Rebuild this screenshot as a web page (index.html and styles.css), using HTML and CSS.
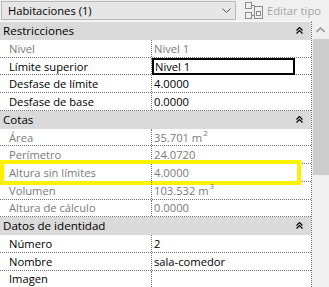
FILE: index.html
```html
<!DOCTYPE html>
<html>
<head>
<meta charset="utf-8">
<link rel="stylesheet" href="styles.css">
</head>
<body>
<div class="top">
  <div class="dropdown">
    <span>Habitaciones (1)</span>
    <svg class="chev" width="9" height="6" viewBox="0 0 9 6"><path d="M0.5 0.5 L4.5 4.5 L8.5 0.5" fill="none" stroke="#555" stroke-width="1"/></svg>
  </div>
  <div class="edit">
    <svg class="edit-ico" width="18" height="17" viewBox="0 0 18 17">
      <g fill="none" stroke="#8c8c8c" stroke-width="1">
        <rect x="0.5" y="0.5" width="6" height="6"/>
        <rect x="0.5" y="10.5" width="6" height="6"/>
        <path d="M6.5 3.5 H9.5 V13.5 H6.5"/>
        <rect x="9.5" y="4.5" width="8" height="12"/>
        <rect x="11.5" y="9.5" width="4" height="4"/>
      </g>
    </svg>
    <span>Editar tipo</span>
  </div>
</div>
<div class="main">
  <div class="table">
    <div class="hdr"><span>Restricciones</span><svg class="col" width="7" height="7" viewBox="0 0 7 7"><path d="M0.5 3.5 L3.5 0.5 L6.5 3.5 M0.5 6.5 L3.5 3.5 L6.5 6.5" fill="none" stroke="#000" stroke-width="1.2"/></svg></div>
    <div class="row ro"><div class="k">Nivel</div><div class="v">Nivel 1</div></div>
    <div class="row"><div class="k">Límite superior</div><div class="v"><div class="edit-box">Nivel 1</div></div></div>
    <div class="row"><div class="k">Desfase de límite</div><div class="v">4.0000</div></div>
    <div class="row"><div class="k">Desfase de base</div><div class="v">0.0000</div></div>
    <div class="hdr"><span>Cotas</span><svg class="col" width="7" height="7" viewBox="0 0 7 7"><path d="M0.5 3.5 L3.5 0.5 L6.5 3.5 M0.5 6.5 L3.5 3.5 L6.5 6.5" fill="none" stroke="#000" stroke-width="1.2"/></svg></div>
    <div class="row ro"><div class="k">Área</div><div class="v">35.701 m<sup>2</sup></div></div>
    <div class="row ro"><div class="k">Perímetro</div><div class="v">24.0720</div></div>
    <div class="row ro mark"><div class="k">Altura sin límites</div><div class="v">4.0000</div><div class="hl"></div></div>
    <div class="row ro"><div class="k">Volumen</div><div class="v">103.532 m<sup>3</sup></div></div>
    <div class="row ro"><div class="k">Altura de cálculo</div><div class="v">0.0000</div></div>
    <div class="hdr"><span>Datos de identidad</span><svg class="col" width="7" height="7" viewBox="0 0 7 7"><path d="M0.5 3.5 L3.5 0.5 L6.5 3.5 M0.5 6.5 L3.5 3.5 L6.5 6.5" fill="none" stroke="#000" stroke-width="1.2"/></svg></div>
    <div class="row"><div class="k">Número</div><div class="v">2</div></div>
    <div class="row"><div class="k">Nombre</div><div class="v">sala-comedor</div></div>
    <div class="row"><div class="k">Imagen</div><div class="v"></div></div>
  </div>
  <div class="scroll">
    <div class="up"><svg width="9" height="6" viewBox="0 0 9 6"><path d="M0.5 5 L4.5 1 L8.5 5" fill="none" stroke="#999" stroke-width="1.6"/></svg></div>
    <div class="thumb"></div>
  </div>
</div>
</body>
</html>
```
FILE: styles.css
```css
html, body {
  margin: 0;
  padding: 0;
}
body {
  width: 329px;
  height: 287px;
  overflow: hidden;
  background: #f0f0f0;
  font-family: "Open Sans", "Noto Sans", sans-serif;
  font-size: 11.2px;
  color: #000;
}
.top {
  display: flex;
  align-items: center;
  height: 21px;
}
.dropdown {
  margin-left: 1px;
  width: 235px;
  height: 19px;
  box-sizing: border-box;
  border: 1px solid #b9b9b9;
  background: #e6e6e6;
  display: flex;
  align-items: center;
  justify-content: space-between;
  padding: 0 4px 0 6px;
}
.edit {
  display: flex;
  align-items: center;
  margin-left: 9px;
  color: #a6a6a6;
  white-space: nowrap;
}
.edit-ico {
  margin-right: 4px;
}
.main {
  display: flex;
  height: 266px;
}
.table {
  width: 311px;
  border-right: 1px dotted #777;
  border-top: 1px solid #fafafa;
  background: #fff;
}
.hdr {
  height: 17px;
  background: #dadada;
  display: flex;
  align-items: center;
  justify-content: space-between;
  padding: 0 8px 0 3px;
  border-bottom: 1px solid #dadada;
  font-size: 11.6px;
}
.row {
  position: relative;
  display: flex;
  height: 16.7px;
  border-bottom: 1px dotted #777;
}
.k {
  width: 142px;
  padding-left: 9px;
  border-right: 1px dotted #777;
  display: flex;
  align-items: center;
  white-space: nowrap;
}
.v {
  flex: 1;
  display: flex;
  align-items: center;
  padding-left: 2px;
  white-space: nowrap;
}
.ro .k, .ro .v {
  color: #7b7b7b;
}
.edit-box {
  margin-left: -2px;
  width: 143px;
  height: 17px;
  box-sizing: border-box;
  border: 2px solid #000;
  display: flex;
  align-items: center;
  padding-left: 1px;
}
sup {
  font-size: 8px;
  align-self: flex-start;
  line-height: 8px;
  margin-left: 1px;
}
.hl {
  position: absolute;
  left: 0;
  top: -4px;
  width: 301px;
  height: 25px;
  box-sizing: border-box;
  border: 4px solid #fbf200;
}
.scroll {
  width: 17px;
  display: flex;
  flex-direction: column;
  background: #f0f0f0;
}
.up {
  height: 18px;
  display: flex;
  align-items: center;
  justify-content: center;
}
.thumb {
  margin-left: 1px;
  width: 16px;
  height: 136px;
  background: #cdcdcd;
}
```
